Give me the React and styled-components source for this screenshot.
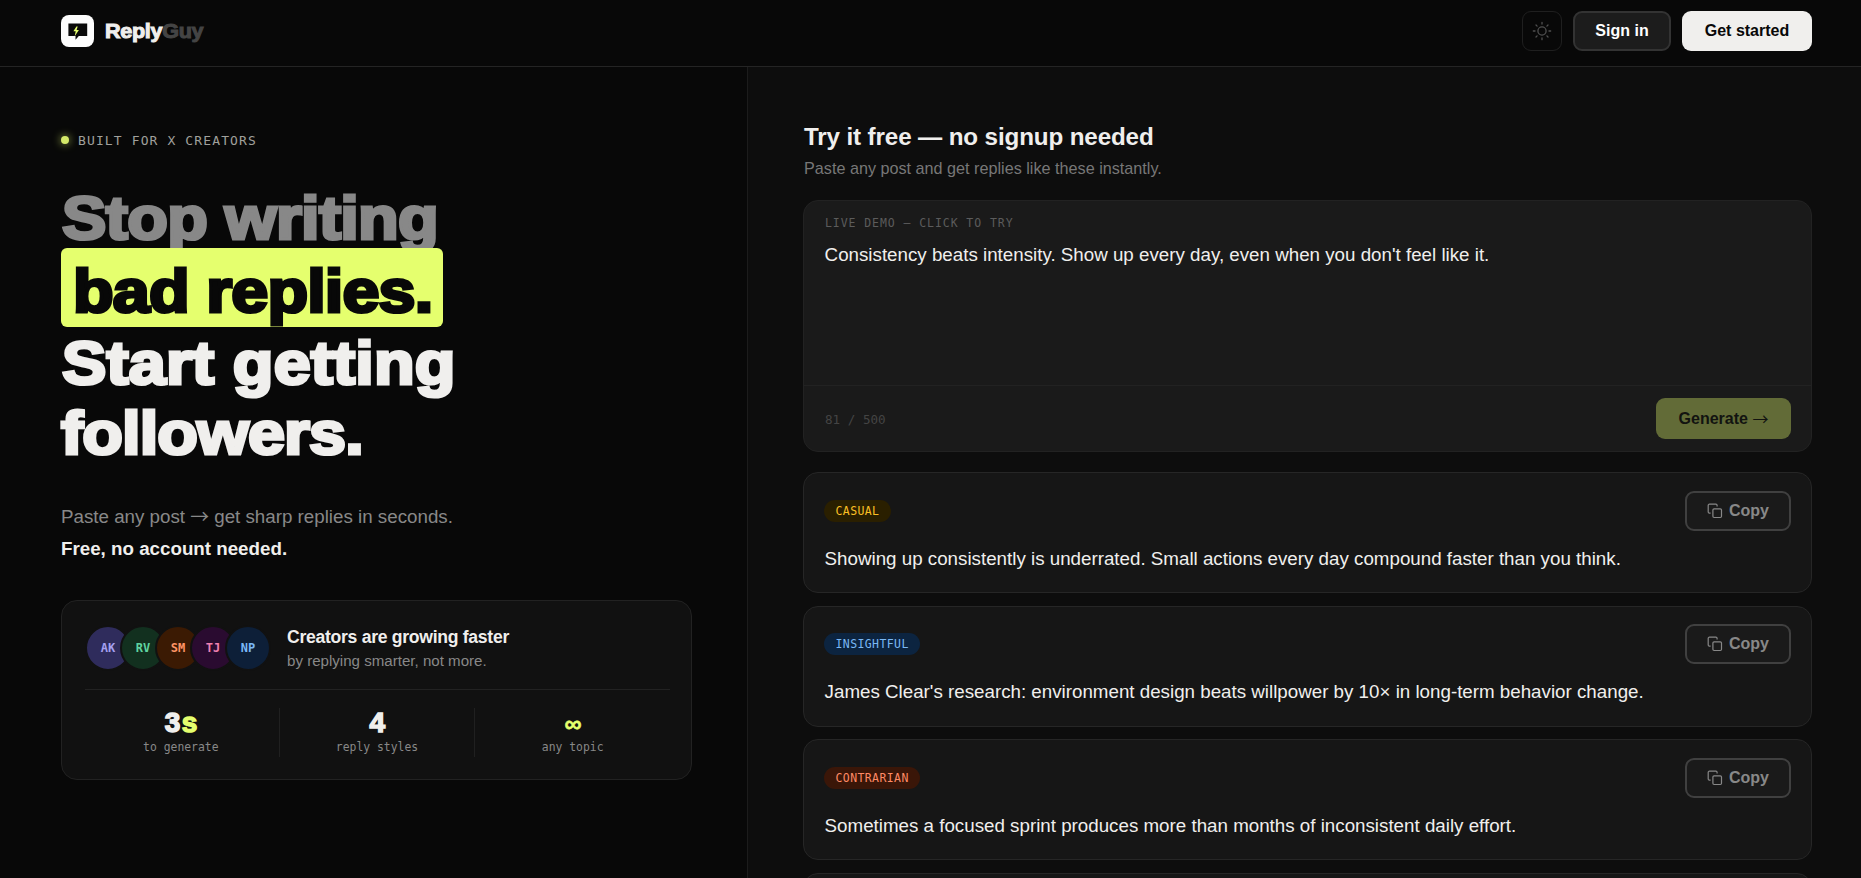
import React from "react";
import styled, { createGlobalStyle } from "styled-components";

const SANS = `"Liberation Sans", Arial, sans-serif`;
const MONO = `"DejaVu Sans Mono", monospace`;

const colors = {
  bg: "#080808",
  panel: "#0d0d0d",
  card: "#111111",
  reply: "#161616",
  input: "#1a1a1a",
  line: "#222222",
  white: "#f0efed",
  lime: "#e5ff6e",
  grey: "#888888",
};

const AVATARS = [
  { initials: "AK", bg: "#2f2c5c", color: "#a5a0f0" },
  { initials: "RV", bg: "#12301f", color: "#5fd3a0" },
  { initials: "SM", bg: "#3b1a03", color: "#ff9466" },
  { initials: "TJ", bg: "#2a0b30", color: "#f080b0" },
  { initials: "NP", bg: "#0d1f38", color: "#7ab8f5" },
];

const STATS = [
  { value: "3", accent: "s", label: "to generate" },
  { value: "4", label: "reply styles" },
  { symbol: "∞", label: "any topic" },
];

const REPLIES = [
  {
    tone: "CASUAL",
    bg: "#2a1f00",
    color: "#fbbf24",
    text: "Showing up consistently is underrated. Small actions every day compound faster than you think.",
  },
  {
    tone: "INSIGHTFUL",
    bg: "#0c2440",
    color: "#7ab8f5",
    text: "James Clear's research: environment design beats willpower by 10× in long-term behavior change.",
  },
  {
    tone: "CONTRARIAN",
    bg: "#3a1608",
    color: "#ff8a65",
    text: "Sometimes a focused sprint produces more than months of inconsistent daily effort.",
  },
];

const CopyIcon = () => (
  <svg width="16" height="16" viewBox="0 0 16 16" fill="none" stroke="currentColor" strokeWidth="1.2">
    <rect x="5.9" y="5.9" width="8.6" height="8.6" rx="1.2" />
    <path d="M3.6 10.1H2.4a1.2 1.2 0 0 1-1.2-1.2V2.4a1.2 1.2 0 0 1 1.2-1.2h6.5a1.2 1.2 0 0 1 1.2 1.2v1.2" />
  </svg>
);

const SunIcon = () => (
  <svg width="20" height="20" viewBox="0 0 20 20" fill="none" stroke="currentColor" strokeWidth="1.3" strokeLinecap="round">
    <circle cx="10" cy="10" r="4.1" />
    <path d="M10 1.3v1.7M10 17v1.7M1.3 10H3M17 10h1.7M4 4l1.1 1.1M14.9 14.9 16 16M4 16l1.1-1.1M14.9 5.1 16 4" />
  </svg>
);

const BubbleIcon = () => (
  <svg width="20" height="18" viewBox="0 0 20 18">
    <path d="M.4 1.6h18.8V14h-8.4l-3.3 3.8V14H.4z" fill="#0a0a0a" />
    <path d="M8.4 4.6 5.4 9.3h2.3l-1 4.9 4.2-6.2H8.6l1.1-3.4z" fill={colors.lime} />
  </svg>
);

const App = () => {
  return (
    <Page>
      <GlobalStyle />
      <Header>
        <Brand>
          <LogoBox>
            <BubbleIcon />
          </LogoBox>
          <BrandName>
            Reply<span>Guy</span>
          </BrandName>
        </Brand>
        <Actions>
          <ThemeButton aria-label="Toggle theme">
            <SunIcon />
          </ThemeButton>
          <SignIn>Sign in</SignIn>
          <GetStarted>Get started</GetStarted>
        </Actions>
      </Header>
      <Main>
        <Hero>
          <Eyebrow>
            <Dot />
            BUILT FOR X CREATORS
          </Eyebrow>
          <Headline>
            <Line $color={colors.grey} $spacing="-0.65px" $indent="1px">Stop writing</Line>
            <Highlight>
              <Line $color={colors.bg} $spacing="-0.8px">bad replies.</Line>
            </Highlight>
            <Line $spacing="0.1px" $indent="1px">Start getting</Line>
            <Line $spacing="-0.8px">followers.</Line>
          </Headline>
          <Lead>
            Paste any post <Arrow>→</Arrow> get sharp replies in seconds.
            <strong>Free, no account needed.</strong>
          </Lead>
          <ProofCard>
            <ProofTop>
              <Avatars>
                {AVATARS.map((a) => (
                  <Avatar key={a.initials} $bg={a.bg} $color={a.color}>
                    {a.initials}
                  </Avatar>
                ))}
              </Avatars>
              <ProofCopy>
                <ProofTitle>Creators are growing faster</ProofTitle>
                <ProofText>by replying smarter, not more.</ProofText>
              </ProofCopy>
            </ProofTop>
            <Stats>
              {STATS.map((s) => (
                <Stat key={s.label}>
                  <StatValue>
                    {s.value}
                    {s.accent && <Accent>{s.accent}</Accent>}
                    {s.symbol && <Accent $small>{s.symbol}</Accent>}
                  </StatValue>
                  <StatLabel>{s.label}</StatLabel>
                </Stat>
              ))}
            </Stats>
          </ProofCard>
        </Hero>
        <Demo>
          <DemoTitle>Try it free — no signup needed</DemoTitle>
          <DemoText>Paste any post and get replies like these instantly.</DemoText>
          <Composer>
            <ComposerBody>
              <ComposerLabel>LIVE DEMO — CLICK TO TRY</ComposerLabel>
              <PostText>Consistency beats intensity. Show up every day, even when you don't feel like it.</PostText>
            </ComposerBody>
            <ComposerFooter>
              <Counter>81 / 500</Counter>
              <Generate>
                Generate <Arrow>→</Arrow>
              </Generate>
            </ComposerFooter>
          </Composer>
          <Replies>
            {REPLIES.map((r) => (
              <ReplyCard key={r.tone}>
                <ReplyTop>
                  <Tone $bg={r.bg} $color={r.color}>
                    {r.tone}
                  </Tone>
                  <CopyButton>
                    <CopyIcon />
                    Copy
                  </CopyButton>
                </ReplyTop>
                <ReplyText>{r.text}</ReplyText>
              </ReplyCard>
            ))}
            <ReplyCard />
          </Replies>
        </Demo>
      </Main>
    </Page>
  );
};

export default App;

const GlobalStyle = createGlobalStyle`
  *, *::before, *::after {
    box-sizing: border-box;
  }
  body {
    margin: 0;
    background: ${colors.bg};
    overflow: hidden;
  }
  button {
    font-family: inherit;
    margin: 0;
    cursor: pointer;
  }
  p, h1, h2 {
    margin: 0;
  }
`;

const Page = styled.div`
  display: flex;
  flex-direction: column;
  height: 100vh;
  overflow: hidden;
  background: ${colors.bg};
  color: ${colors.white};
  font-family: ${SANS};
`;

const Header = styled.header`
  display: flex;
  flex: none;
  align-items: center;
  justify-content: space-between;
  height: 67px;
  padding: 0 49px 4px 61px;
  border-bottom: 1px solid #242424;
`;

const Brand = styled.div`
  display: flex;
  align-items: center;
  gap: 11px;
`;

const LogoBox = styled.div`
  display: flex;
  align-items: center;
  justify-content: center;
  width: 33px;
  height: 32px;
  border-radius: 8px;
  background: #fdfdfd;
`;

const BrandName = styled.div`
  padding-top: 1px;
  font-size: 20px;
  font-weight: 700;
  letter-spacing: -0.3px;
  transform: scaleX(1.08);
  transform-origin: left;
  -webkit-text-stroke: 1px currentColor;
  span {
    color: #444444;
  }
`;

const Actions = styled.div`
  display: flex;
  gap: 11px;
`;

const ThemeButton = styled.button`
  display: flex;
  align-items: center;
  justify-content: center;
  width: 40px;
  height: 40px;
  padding: 0;
  border: 1px solid #1f1f1f;
  border-radius: 9px;
  background: transparent;
  color: #505050;
`;

const SignIn = styled.button`
  width: 98px;
  height: 40px;
  padding: 0;
  border: 2px solid #333333;
  border-radius: 9px;
  background: #1c1c1c;
  color: #ffffff;
  font-size: 16px;
  font-weight: 700;
`;

const GetStarted = styled(SignIn)`
  width: 130px;
  border: 0;
  background: ${colors.white};
  color: #080808;
`;

const Main = styled.main`
  display: grid;
  grid-template-columns: 747px 1fr;
  flex: 1;
  min-height: 0;
`;

const Hero = styled.section`
  padding: 64px 55px 0 61px;
`;

const Eyebrow = styled.div`
  display: flex;
  align-items: center;
  gap: 9px;
  height: 18px;
  color: #a0a09c;
  font-family: ${MONO};
  font-size: 13px;
  letter-spacing: 1.12px;
`;

const Dot = styled.span`
  width: 8px;
  height: 8px;
  border-radius: 50%;
  background: #d5ea69;
  box-shadow: 0 0 8px rgba(229, 255, 110, 0.7);
`;

const Headline = styled.h1`
  display: flex;
  flex-direction: column;
  align-items: flex-start;
  margin-top: 34px;
  font-size: 60.5px;
  font-weight: 700;
  line-height: 70px;
  white-space: nowrap;
  -webkit-text-stroke: 3.2px currentColor;
`;

/* widened to get the heavy, broad display cut */
const Line = styled.span`
  display: block;
  padding-left: ${(p) => p.$indent || 0};
  color: ${(p) => p.$color || colors.white};
  letter-spacing: ${(p) => p.$spacing};
  transform: scaleX(1.1);
  transform-origin: left;
`;

const Highlight = styled.span`
  position: relative;
  width: 382px;
  height: 79px;
  margin: -5px 0 1px;
  padding: 8px 12px 0;
  border-radius: 6px;
  background: ${colors.lime};
`;

const Arrow = styled.span`
  font-family: "Noto Sans CJK JP", sans-serif;
  font-weight: 400;
  line-height: 1;
  vertical-align: -1px;
`;

const Lead = styled.p`
  margin-top: 33px;
  color: ${colors.grey};
  font-size: 18.75px;
  line-height: 32px;
  strong {
    display: block;
    color: ${colors.white};
  }
`;

const ProofCard = styled.div`
  width: 631px;
  height: 180px;
  margin-top: 35px;
  padding: 23px 21px 0 23px;
  border: 1px solid ${colors.line};
  border-radius: 16px;
  background: ${colors.card};
`;

const ProofTop = styled.div`
  display: flex;
  align-items: center;
  gap: 16px;
  padding-bottom: 17px;
  border-bottom: 1px solid ${colors.line};
`;

const Avatars = styled.div`
  display: flex;
`;

const Avatar = styled.div`
  display: flex;
  align-items: center;
  justify-content: center;
  width: 46px;
  height: 46px;
  border: 2px solid ${colors.card};
  border-radius: 50%;
  background: ${(p) => p.$bg};
  color: ${(p) => p.$color};
  font-family: ${MONO};
  font-size: 12px;
  font-weight: 700;
  & + & {
    margin-left: -11px;
  }
`;

const ProofCopy = styled.div`
  padding-top: 2px;
`;

const ProofTitle = styled.div`
  font-size: 17.6px;
  font-weight: 700;
  line-height: 23px;
  letter-spacing: -0.29px;
`;

const ProofText = styled.div`
  color: ${colors.grey};
  font-size: 15.1px;
  line-height: 23px;
`;

const Stats = styled.div`
  display: grid;
  grid-template-columns: repeat(3, 1fr);
  margin: 18px 0 0 -2px;
`;

const Stat = styled.div`
  height: 49px;
  text-align: center;
  & + & {
    border-left: 1px solid #202020;
  }
`;

const StatValue = styled.div`
  height: 31px;
  padding-left: 2px;
  font-size: 28px;
  font-weight: 700;
  line-height: 29px;
  letter-spacing: 1.4px;
  -webkit-text-stroke: 1.5px currentColor;
`;

const Accent = styled.span`
  color: ${colors.lime};
  font-size: ${(p) => (p.$small ? "24px" : "inherit")};
  -webkit-text-stroke-width: ${(p) => (p.$small ? "0.5px" : "1.5px")};
`;

const StatLabel = styled.div`
  color: ${colors.grey};
  font-family: ${MONO};
  font-size: 11.4px;
  line-height: 16px;
`;

const Demo = styled.section`
  padding: 56px 49px 0 55px;
  border-left: 1px solid #1c1c1c;
  background: ${colors.panel};
`;

const DemoTitle = styled.h2`
  padding-left: 1px;
  font-size: 24.2px;
  line-height: 28px;
  letter-spacing: -0.13px;
`;

const DemoText = styled.p`
  margin-top: 6px;
  padding-left: 1px;
  color: #777777;
  font-size: 16.2px;
  line-height: 22px;
`;

const Composer = styled.div`
  height: 252px;
  margin-top: 21px;
  border: 1px solid ${colors.line};
  border-radius: 15px;
  background: ${colors.input};
`;

const ComposerBody = styled.div`
  height: 185px;
  padding: 14px 20px;
  border-bottom: 1px solid ${colors.line};
`;

const ComposerLabel = styled.div`
  padding-left: 1px;
  color: #5c5c5c;
  font-family: ${MONO};
  font-size: 11.5px;
  line-height: 16px;
  letter-spacing: 0.93px;
`;

const PostText = styled.p`
  margin-top: 10px;
  padding-left: 0.6px;
  font-size: 18.75px;
  line-height: 28px;
`;

const ReplyText = styled(PostText)`
  margin-top: 13.8px;
`;

const ComposerFooter = styled.div`
  display: flex;
  align-items: center;
  justify-content: space-between;
  height: 65px;
  padding: 0 20px;
`;

const Counter = styled.span`
  padding: 1px 0 0 1px;
  color: #444444;
  font-family: ${MONO};
  font-size: 12.6px;
`;

const Generate = styled.button`
  width: 135px;
  height: 41px;
  padding: 0;
  border: 0;
  border-radius: 9px;
  background: #626b37;
  color: #121310;
  font-size: 16px;
  font-weight: 700;
`;

const Replies = styled.div`
  display: flex;
  flex-direction: column;
  gap: 12.6px;
  margin-top: 20px;
`;

const ReplyCard = styled.article`
  flex: none;
  height: 121px;
  padding: 17.8px 20px;
  border: 1px solid #262626;
  border-radius: 15px;
  background: ${colors.reply};
`;

const ReplyTop = styled.div`
  display: flex;
  align-items: center;
  justify-content: space-between;
`;

const Tone = styled.span`
  height: 22px;
  padding: 0 11.5px;
  border-radius: 11px;
  background: ${(p) => p.$bg};
  color: ${(p) => p.$color};
  font-family: ${MONO};
  font-size: 11.5px;
  line-height: 22px;
  letter-spacing: 0.4px;
`;

const CopyButton = styled.button`
  display: flex;
  align-items: center;
  justify-content: center;
  gap: 6px;
  width: 106px;
  height: 40px;
  padding: 0;
  border: 2px solid #404040;
  border-radius: 9px;
  background: #1a1a1a;
  color: #888888;
  font-size: 16px;
  font-weight: 700;
`;
